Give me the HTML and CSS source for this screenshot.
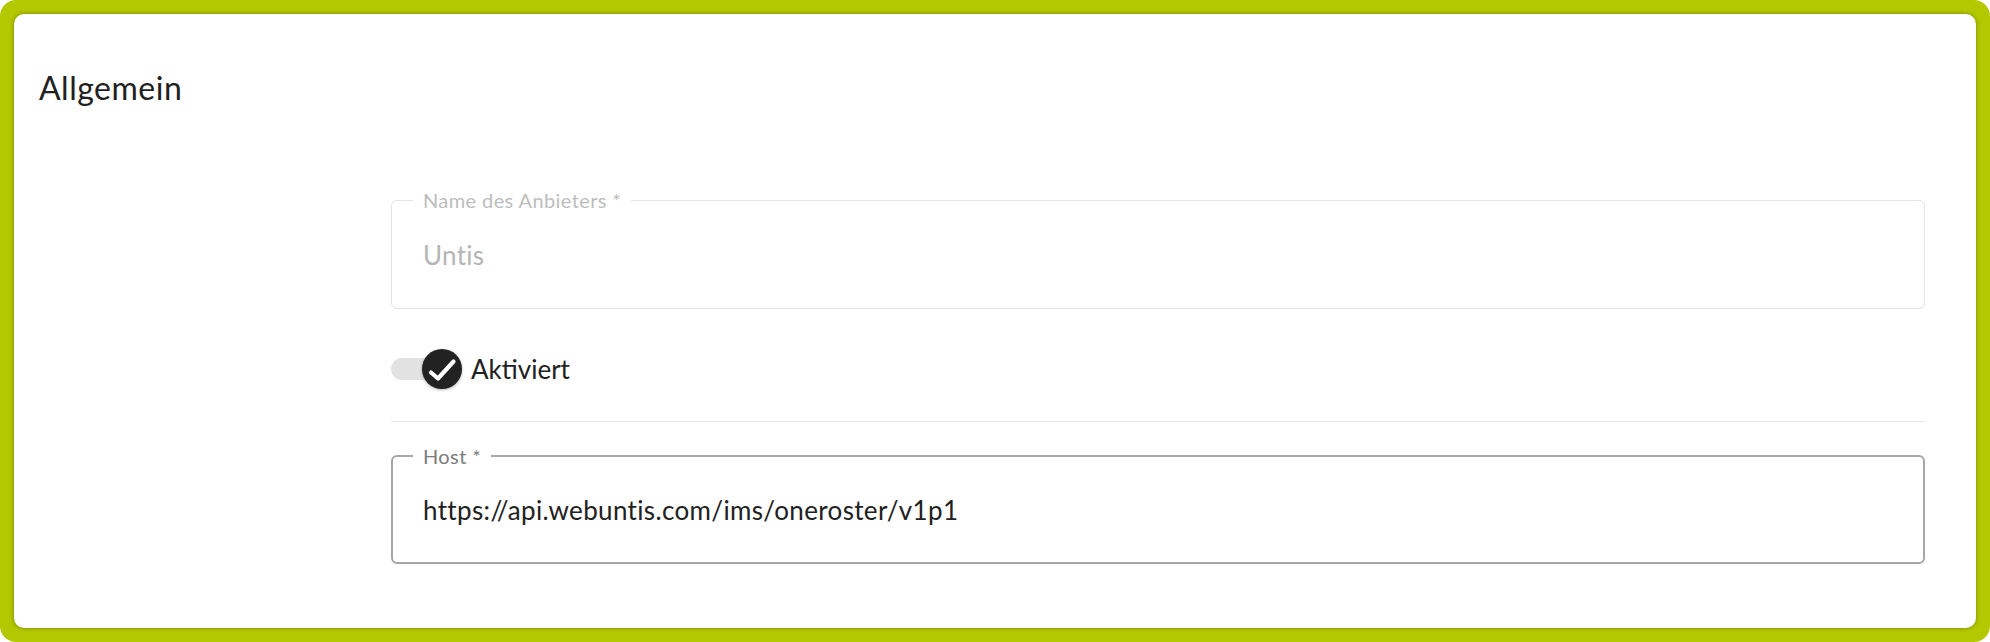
FILE: index.html
```html
<!DOCTYPE html>
<html lang="de">
<head>
<meta charset="utf-8">
<title>Allgemein</title>
<link rel="stylesheet" href="styles.css">
</head>
<body>
<div class="frame">
  <div class="card">
    <h2 class="title">Allgemein</h2>
    <div class="form">
      <fieldset class="field field--disabled">
        <legend>Name des Anbieters *</legend>
        <div class="value">Untis</div>
      </fieldset>
      <div class="switch-row">
        <span class="track"></span>
        <span class="thumb">
          <svg viewBox="0 0 40 40" width="40" height="40" aria-hidden="true">
            <polyline points="9,23.5 16,29.5 31.5,12.5" fill="none" stroke="#fff" stroke-width="4.2" stroke-linecap="round" stroke-linejoin="round"/>
          </svg>
        </span>
        <span class="switch-label">Aktiviert</span>
      </div>
      <hr class="divider">
      <fieldset class="field field--active">
        <legend>Host *</legend>
        <div class="value">https://api.webuntis.com/ims/oneroster/v1p1</div>
      </fieldset>
    </div>
  </div>
</div>
</body>
</html>
```
FILE: styles.css
```css
html, body {
  margin: 0;
  background: #ffffff;
}
body {
  font-family: Lato, "Noto Sans", sans-serif;
  color: #212121;
}
.frame {
  height: 642px;
  box-sizing: border-box;
  padding: 14px;
  background: #b4c800;
  border-radius: 16px;
}
.card {
  height: 100%;
  box-sizing: border-box;
  background: #ffffff;
  border-radius: 10px;
  box-shadow: 0 0 4px rgba(0, 0, 0, 0.35);
  padding: 56px 51px 0 25px;
}
.title {
  margin: 0;
  font-size: 32px;
  line-height: 36px;
  font-weight: 400;
  letter-spacing: 0.5px;
  color: #212121;
}
.form {
  margin: 84px 0 0 352px;
}
.field {
  margin: 0;
  min-width: 0;
  border-radius: 6px;
}
.field legend {
  padding: 0 10px;
  margin-left: -10px;
  font-size: 20px;
  line-height: 20px;
  letter-spacing: 0.4px;
}
.field .value {
  font-size: 26px;
  line-height: 30px;
}
.field--disabled {
  border: 1px solid #e3e3e3;
  padding: 30px 31px 38px;
}
.field--disabled legend {
  color: #bdbdbd;
}
.field--disabled .value {
  color: #b5b5b5;
  letter-spacing: 0.3px;
}
.field--active {
  border: 2px solid #a6a6a6;
  padding: 29px 30px 37px;
}
.field--active legend {
  color: #7b7b7b;
}
.field--active .value {
  color: #212121;
  letter-spacing: 0.35px;
}
.switch-row {
  display: flex;
  align-items: center;
  height: 40px;
  margin-top: 40px;
}
.track {
  width: 56px;
  height: 22px;
  border-radius: 11px;
  background: #e2e2e2;
}
.thumb {
  display: flex;
  width: 40px;
  height: 40px;
  margin-left: -25px;
  border-radius: 50%;
  background: #222222;
  box-shadow: 0 1px 3px rgba(0, 0, 0, 0.3);
}
.switch-label {
  margin-left: 9px;
  font-size: 26px;
  line-height: 30px;
  color: #212121;
}
.divider {
  margin: 32px 0 24px;
  height: 0;
  border: 0;
  border-top: 1px solid #e8e8e8;
}
```
